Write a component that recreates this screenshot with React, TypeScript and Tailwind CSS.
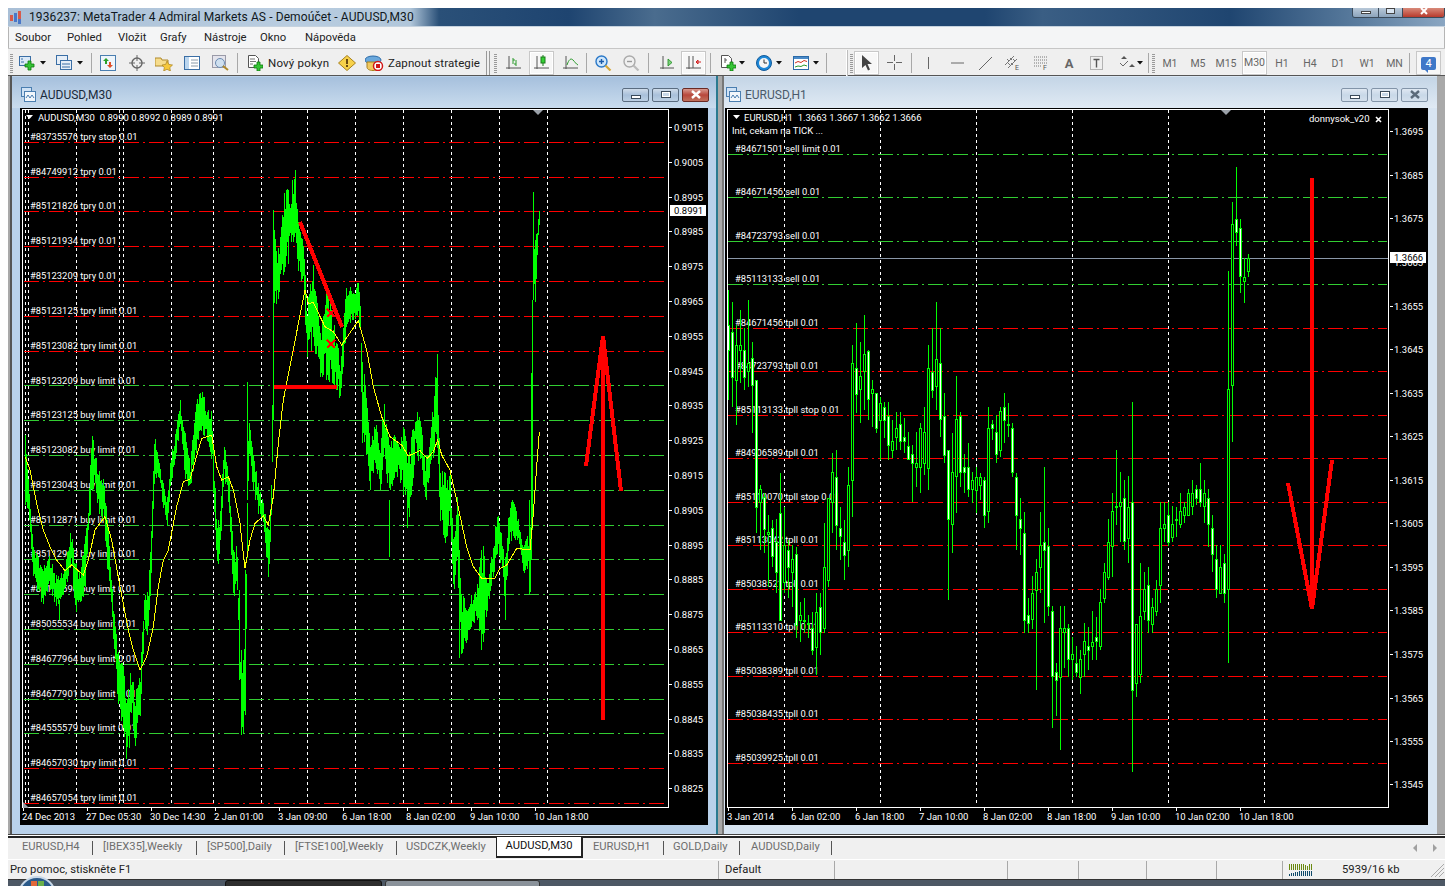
import React from "react";

type P3 = [number, number, number];
const FONT = "Roboto, 'Liberation Sans', sans-serif";

function rng(seed: number) {
  let s = seed;
  return () => {
    s = (s * 1664525 + 1013904223) % 4294967296;
    return s / 4294967296;
  };
}

const seg9: P3[] = [[15,100,320],[25,240,330],[40,445,550],[70,500,625],[85,460,560],[110,530,630],[135,500,570],[152,375,500],[165,480,635],[180,520,640],[195,390,560],[205,290,400],[215,100,290],[225,150,250],[235,200,350],[250,240,370],[262,350,520],[272,520,595],[282,640,770],[295,760,940],[310,800,990],[318,900,1080],[335,780,960],[345,880,1040],[360,810,950],[372,575,700],[382,575,710],[392,420,560],[403,95,240],[415,170,230],[425,230,300],[440,300,390],[450,180,270],[465,100,180],[480,0,90],[495,95,240],[510,190,280],[525,0,170],[545,-30,100],[565,30,130],[575,30,190],[590,380,530],[600,320,440],[612,125,250],[625,210,310],[640,460,600],[650,430,590],[658,750,800],[665,820,1000],[675,700,940],[685,40,180],[697,130,260],[712,240,340],[730,310,370],[745,390,560],[755,160,300]];
const seg7: P3[] = [[760,150,470],[770,300,440],[790,100,340],[810,70,300],[825,30,220],[835,200,350],[850,250,380],[860,440,620],[880,300,560],[900,500,650],[920,370,660],[940,470,680],[960,590,720],[980,360,500],[1000,400,490],[1015,355,480]];
const seg10: P3[] = [[60,360,480],[65,530,790],[75,600,810],[90,800,935],[105,715,850],[120,820,950],[130,650,830],[148,800,960],[160,760,900],[175,790,890],[190,730,950],[205,830,1040],[225,670,830],[240,715,860],[255,830,980],[270,770,880],[290,520,780],[300,880,1040],[315,860,1090],[330,880,1040],[340,1100,1235],[352,930,1200],[362,1230,1430],[383,1260,1380],[395,1240,1340],[410,1210,1320],[427,1080,1410],[440,1200,1300],[455,1120,1210],[472,980,1130],[485,1070,1160],[495,1130,1320],[505,1000,1100],[517,950,1080],[535,1020,1080],[550,1090,1180],[565,1060,1180],[570,1040,1240],[573,580,1040],[578,190,380],[585,180,370],[592,130,210],[598,85,140]];

const envL: P3[] = [
  ...seg9.map(([z, t, b]): P3 => [20 + z / 3, 400 + t / 3, 400 + b / 3]),
  ...seg7.map(([z, t, b]): P3 => [20 + z / 3, 160 + t / 3, 160 + b / 3]),
  ...seg10.map(([z, t, b]): P3 => [340 + z / 3, 180 + t / 3, 180 + b / 3]),
];

function leftBars() {
  const r = rng(77);
  let d = "";
  let j = 0;
  for (let x = 25; x <= 539; x++) {
    while (j < envL.length - 2 && envL[j + 1][0] < x) j++;
    const a = envL[j];
    const c = envL[j + 1];
    const f = Math.max(0, Math.min(1, (x - a[0]) / (c[0] - a[0] || 1)));
    const t = a[1] + (c[1] - a[1]) * f;
    const b = a[2] + (c[2] - a[2]) * f;
    const h = b - t;
    const r1 = r();
    const r2 = r();
    const top = Math.round(t + r1 * r1 * 0.35 * h);
    const bot = Math.round(b - r2 * r2 * 0.35 * h);
    d += `M${x + 0.5} ${top}V${bot}`;
  }
  const spikes = [[59,600,620],[273,210,420],[295,170,230],[389,500,557],[459,600,658],[481,600,650],[407,500,528],[437,354,420],[533,192,300],[532,300,530],[531,373,560],[529,500,594],[505,560,620],[247,382,500],[243,660,733],[239,590,680],[241,650,735],[245,570,715],[129,700,748]];
  spikes.forEach(([x, a, b]) => (d += `M${x + 0.5} ${a}V${b}`));
  return d;
}

const ma9 = [[15,170],[30,210],[50,310],[70,390],[90,440],[110,480],[135,512],[155,495],[190,525],[205,480],[225,390],[255,350],[275,420],[300,560],[325,690],[340,750],[360,810],[380,770],[400,680],[415,560],[430,480],[445,450],[470,320],[490,245],[510,238],[545,115],[575,105],[590,200],[605,240],[625,230],[640,270],[660,370],[675,505],[690,420],[705,370],[730,348],[745,375],[760,290],[775,130],[790,0]];
const ma7 = [[855,390],[865,430],[880,428],[915,500],[940,515],[965,555],[1015,482]];
const ma10 = [[60,440],[80,510],[100,620],[125,710],[150,770],[185,795],[205,828],[240,812],[262,835],[280,815],[293,780],[305,825],[330,870],[350,960],[380,1100],[400,1160],[425,1195],[465,1195],[480,1165],[500,1155],[530,1105],[570,1110],[580,1000],[590,860],[598,755]];
const maPts = [
  ...ma9.map(([z, y]) => `${20 + z / 3},${400 + y / 3}`),
  ...ma7.map(([z, y]) => `${20 + z / 3},${160 + y / 3}`),
  ...ma10.map(([z, y]) => `${340 + z / 3},${180 + y / 3}`),
].join(" ");

// [x, wickTop, bodyTop, bodyBottom, wickBottom, white]
type C = [number, number, number, number, number, number];
const c8: C[] = [[732,5,95,230,320,1],[736,75,135,240,375,0],[740,30,135,150,250,0],[744,85,150,230,270,1],[748,0,190,215,260,0],[752,125,175,255,400,1],[756,240,240,620,700,1],[760,555,568,608,750,0],[764,580,590,685,760,1],[768,645,695,700,860,0],[772,660,685,770,800,1],[776,658,725,815,880,1],[828,595,595,840,860,0],[832,460,515,605,700,0],[836,450,530,673,750,1],[840,620,685,710,780,1],[844,660,725,765,840,1],[848,500,555,750,800,0],[852,135,190,540,650,0],[856,70,203,280,340,1],[860,125,228,268,370,0],[864,45,163,215,330,0],[868,150,152,295,360,1],[872,240,268,280,380,0],[876,280,280,385,400,1],[880,290,308,358,480,0],[884,305,320,358,415,1],[888,305,347,435,480,1],[892,360,423,450,475,0],[896,335,385,412,450,0],[900,335,373,423,450,1],[904,355,412,423,460,1],[908,395,437,475,480,1],[912,435,463,490,605,1],[916,395,490,502,560,0],[920,370,385,502,580,0],[924,320,397,490,525,0],[928,135,203,502,570,0],[932,85,215,268,295,1],[936,5,176,257,330,0],[940,85,190,358,410,1],[944,280,347,463,490,1],[948,450,450,658,900,1],[952,400,517,673,760,0],[956,228,358,528,640,0],[960,335,347,515,560,1],[964,462,502,517,580,1],[968,430,502,568,590,1],[972,515,541,568,610,0],[976,500,530,568,640,0],[980,520,530,555,600,0],[984,530,541,645,685,1],[988,320,385,633,670,0],[992,360,373,385,420,1],[996,345,397,463,490,1],[1000,320,333,450,470,0],[1004,280,320,358,430,1],[1008,308,372,375,410,0]];
const c11: C[] = [[780,-200,-80,240,240,1],[784,-100,15,125,160,0],[788,0,30,80,175,1],[792,15,58,98,200,0],[796,20,42,255,295,1],[800,185,225,240,305,0],[804,175,239,241,280,0],[808,225,249,251,295,0],[812,215,265,330,345,1],[816,160,215,320,405,0],[820,160,200,275,345,1],[824,-50,82,265,280,0]];
const c12: C[] = [[1012,820,835,968,980,1],[1016,968,980,1095,1200,1],[1020,1045,1108,1135,1215,1],[1024,1085,1148,1408,1448,1],[1028,1345,1395,1420,1448,1],[1032,1278,1330,1408,1438,0],[1036,1228,1265,1318,1620,0],[1040,1085,1185,1252,1330,0],[1044,950,1175,1200,1420,1],[1048,1135,1187,1368,1397,1],[1052,1368,1383,1578,1734,1],[1056,1539,1566,1590,1698,1],[1060,1368,1434,1580,1800,0],[1064,1368,1435,1448,1554,0],[1068,1422,1435,1527,1581,1],[1072,1461,1513,1528,1590,0],[1076,1488,1540,1566,1581,1],[1080,1500,1527,1581,1632,0],[1084,1420,1473,1513,1581,0],[1088,1430,1488,1500,1560,1],[1092,1383,1475,1488,1530,0],[1096,1400,1462,1475,1530,1],[1100,1318,1357,1490,1500,0],[1104,1240,1267,1345,1358,0],[1108,1108,1175,1280,1290,0],[1112,1030,1083,1187,1280,0],[1116,900,1069,1071,1125,0],[1120,967,1057,1070,1175,0],[1124,990,1045,1175,1200,1],[1128,978,1070,1162,1240,0],[1132,756,1057,1620,1866,1],[1136,1422,1422,1600,1640,0],[1140,1240,1397,1570,1600,0],[1144,1265,1318,1383,1410,0],[1148,1252,1305,1410,1448,1],[1152,1345,1370,1422,1448,0],[1156,1290,1318,1383,1397,0],[1160,1057,1135,1305,1358,0],[1164,1057,1122,1135,1175,0],[1168,1057,1095,1175,1187,1],[1172,1068,1122,1162,1175,0],[1176,1070,1107,1109,1160,0],[1180,1030,1083,1122,1135,0],[1184,1057,1070,1095,1120,0],[1188,1018,1030,1095,1095,0],[1192,990,1030,1070,1095,0],[1196,1005,1018,1045,1065,1],[1200,938,1018,1057,1070,1],[1204,990,1030,1070,1120,0],[1208,1018,1045,1122,1190,1],[1212,1095,1135,1213,1265,1],[1216,1185,1228,1318,1345,1],[1220,1185,1252,1330,1330,0],[1224,1213,1240,1330,1360,1],[1228,362,718,1318,1540,0],[1232,155,222,705,875,0],[1236,52,208,247,287,1],[1240,208,235,380,430,1],[1244,325,380,392,458,0],[1248,312,325,365,380,0]];

const candles: C[] = [
  ...c8.map(([x, a, b, c, d, w]): C => [x, 300 + a / 3, 300 + b / 3, 300 + c / 3, 300 + d / 3, w]),
  ...c11.map(([x, a, b, c, d, w]): C => [x, 540 + a / 3, 540 + b / 3, 540 + c / 3, 540 + d / 3, w]),
  ...c12.map(([x, a, b, c, d, w]): C => [x, 150 + a / 3, 150 + b / 3, 150 + c / 3, 150 + d / 3, w]),
  [728,290,325,350,400,1],
];

const lBars = leftBars();

const lLabels = [
  ["#83735576 tpry stop 0.01", 136],["#84749912 tpry 0.01", 171],["#85121826 tpry 0.01", 205],["#85121934 tpry 0.01", 240],["#85123209 tpry 0.01", 275],["#85123125 tpry limit 0.01", 310],["#85123082 tpry limit 0.01", 345],["#85123209 buy limit 0.01", 380],["#85123125 buy limit 0.01", 414],["#85123082 buy limit 0.01", 449],["#85123043 buy limit 0.01", 484],["#85112871 buy limit 0.01", 519],["#85112913 buy limit 0.01", 553],["#85113590 buy limit 0.01", 588],["#85055534 buy limit 0.01", 623],["#84677964 buy limit 0.01", 658],["#84677901 buy limit 0.01", 693],["#84555579 buy limit 0.01", 727],["#84657030 tpry limit 0.01", 762],["#84657054 tpry limit 0.01", 797],
] as [string, number][];
const lRed = [142, 177, 211, 246, 281, 316, 351, 768, 803];
const lGreen = [385, 420, 455, 490, 525, 559, 594, 629, 664, 699, 733];
const lGrid = [25, 28, 76, 119, 123, 171, 213, 261, 307, 355, 403, 451, 499, 547];
const lPrices = [["0.9015",127],["0.9005",162],["0.8995",197],["0.8985",231],["0.8975",266],["0.8965",301],["0.8955",336],["0.8945",371],["0.8935",405],["0.8925",440],["0.8915",475],["0.8905",510],["0.8895",545],["0.8885",579],["0.8875",614],["0.8865",649],["0.8855",684],["0.8845",719],["0.8835",753],["0.8825",788]] as [string, number][];
const lTimes = [["24 Dec 2013",22],["27 Dec 05:30",86],["30 Dec 14:30",150],["2 Jan 01:00",214],["3 Jan 09:00",278],["6 Jan 18:00",342],["8 Jan 02:00",406],["9 Jan 10:00",470],["10 Jan 18:00",534]] as [string, number][];

const rLabels = [
  ["#84671501 sell limit 0.01",148],["#84671456 sell 0.01",191],["#84723793 sell 0.01",235],["#85113133 sell 0.01",278],["#84671456 tpll 0.01",322],["#84723793 tpll 0.01",365],["#85113133 tpll stop 0.01",409],["#84906589 tpll 0.01",452],["#85110070 tpll stop 0.01",496],["#85113042 tpll 0.01",539],["#85038521 tpll 0.01",583],["#85113310 tpll 0.01",626],["#85038389 tpll 0.01",670],["#85038435 tpll 0.01",713],["#85039925 tpll 0.01",757],
] as [string, number][];
const rGreen = [154, 197, 241, 284];
const rRed = [328, 371, 415, 458, 502, 545, 589, 632, 676, 719, 763];
const rGrid = [784, 880, 976, 1072, 1168, 1264];
const rPrices = [["1.3695",131],["1.3685",175],["1.3675",218],["1.3665",262],["1.3655",306],["1.3645",349],["1.3635",393],["1.3625",436],["1.3615",480],["1.3605",523],["1.3595",567],["1.3585",610],["1.3575",654],["1.3565",698],["1.3555",741],["1.3545",784]] as [string, number][];
const rTimes = [["3 Jan 2014",727],["6 Jan 02:00",791],["6 Jan 18:00",855],["7 Jan 10:00",919],["8 Jan 02:00",983],["8 Jan 18:00",1047],["9 Jan 10:00",1111],["10 Jan 02:00",1175],["10 Jan 18:00",1239]] as [string, number][];

const chartText = { fontFamily: FONT, fontSize: 9.5, fill: "#fff" } as const;
const LBL = 9.4;

function LeftChart() {
  return (
    <svg viewBox="20 108 688 717" className="block w-[688px] h-[717px] bg-black" style={chartText}>
      <g stroke="#fff" strokeDasharray="3 3" shapeRendering="crispEdges">
        {lGrid.map((x) => <line key={x} x1={x + 0.5} x2={x + 0.5} y1={110} y2={806} />)}
      </g>
      <g strokeDasharray="15 4 2 4" shapeRendering="crispEdges">
        {lRed.map((y) => <line key={y} x1={24} x2={667} y1={y + 0.5} y2={y + 0.5} stroke="#ff0000" />)}
        {lGreen.map((y) => <line key={y} x1={24} x2={667} y1={y + 0.5} y2={y + 0.5} stroke="#32cd32" />)}
      </g>
      {lLabels.map(([t, y]) => <text key={y} x={30} y={y + 3.5} fontSize={LBL}>{t}</text>)}
      <path d={lBars} stroke="#00ff00" fill="none" shapeRendering="crispEdges" />
      <polyline points={maPts} fill="none" stroke="#ffff00" strokeWidth={1} shapeRendering="crispEdges" />
      <g stroke="#ff0000" fill="none" strokeWidth={4} shapeRendering="crispEdges">
        <line x1={300} y1={222} x2={342} y2={327} />
        <line x1={274} y1={387} x2={337} y2={387} />
        <line x1={603} y1={720} x2={603} y2={336} />
        <path d="M586 466L603 336L621 491" strokeLinejoin="bevel" />
        <path d="M327 340l8 8m0-8l-8 8M327 309l8 8m0-8l-8 8" strokeWidth={2} />
      </g>
      <rect x={22.5} y={109.5} width={646} height={698} fill="none" stroke="#fff" shapeRendering="crispEdges" />
      <path d="M533 110h10l-5 5z" fill="#9aa0a8" />
      <path d="M23 808v-6l6 6z" fill="#9aa0a8" />
      <path d="M26 115h7l-3.500 4z" fill="#fff" />
      <text x={38} y={120.5}>{"AUDUSD,M30\u00a0\u00a00.8990 0.8992 0.8989 0.8991"}</text>
      {lPrices.map(([t, y]) => (
        <g key={t}>
          <line x1={669} x2={672} y1={y + 0.5} y2={y + 0.5} stroke="#fff" shapeRendering="crispEdges" />
          <text x={674} y={y + 3.5}>{t}</text>
        </g>
      ))}
      <rect x={670} y={205} width={36} height={11} fill="#fff" />
      <text x={674} y={214} style={{ fill: "#000" }}>0.8991</text>
      {lTimes.map(([t, x]) => (
        <g key={t}>
          <line x1={x + 1.5} x2={x + 1.5} y1={808} y2={811} stroke="#fff" shapeRendering="crispEdges" />
          <text x={x} y={820}>{t}</text>
        </g>
      ))}
    </svg>
  );
}

function RightChart() {
  return (
    <svg viewBox="725 108 703 717" className="block w-[703px] h-[717px] bg-black" style={chartText}>
      <g stroke="#fff" strokeDasharray="3 3" shapeRendering="crispEdges">
        {rGrid.map((x) => <line key={x} x1={x + 0.5} x2={x + 0.5} y1={110} y2={806} />)}
      </g>
      <g strokeDasharray="15 4 2 4" shapeRendering="crispEdges">
        {rGreen.map((y) => <line key={y} x1={728} x2={1387} y1={y + 0.5} y2={y + 0.5} stroke="#32cd32" />)}
        {rRed.map((y) => <line key={y} x1={728} x2={1387} y1={y + 0.5} y2={y + 0.5} stroke="#ff0000" />)}
      </g>
      <line x1={727} x2={1389} y1={258.5} y2={258.5} stroke="#8a97a8" shapeRendering="crispEdges" />
      {rLabels.map(([t, y]) => <text key={y} x={735} y={y + 3.5} fontSize={LBL}>{t}</text>)}
      <g shapeRendering="crispEdges">
        {candles.map(([x, a, b, c, d, w]) => (
          <g key={x}>
            <line x1={x + 0.5} x2={x + 0.5} y1={Math.round(a)} y2={Math.round(d)} stroke="#00ff00" />
            <rect x={x - 0.5} y={Math.round(b) + 0.5} width={2} height={Math.max(1, Math.round(c - b))} stroke="#00ff00" fill={w ? "#fff" : "#000"} />
          </g>
        ))}
      </g>
      <g stroke="#ff0000" fill="none" strokeWidth={4} shapeRendering="crispEdges">
        <line x1={1312} y1={178} x2={1312} y2={609} />
        <path d="M1288 483L1312 609L1332 460" strokeLinejoin="bevel" />
      </g>
      <rect x={727.5} y={109.5} width={661} height={698} fill="none" stroke="#fff" shapeRendering="crispEdges" />
      <path d="M1221 110h10l-5 5z" fill="#9aa0a8" />
      <path d="M733 115h7l-3.500 4z" fill="#fff" />
      <text x={744} y={120.5}>{"EURUSD,H1\u00a0\u00a01.3663 1.3667 1.3662 1.3666"}</text>
      <text x={732} y={133.5}>Init, cekam na TICK ...</text>
      <text x={1309} y={121.5}>donnysok_v20</text>
      <path d="M1376 117l5 5m0-5l-5 5" stroke="#fff" strokeWidth={1.6} />
      {rPrices.map(([t, y]) => (
        <g key={t}>
          <line x1={1390} x2={1393} y1={y + 0.5} y2={y + 0.5} stroke="#fff" shapeRendering="crispEdges" />
          <text x={1394} y={y + 3.5}>{t}</text>
        </g>
      ))}
      <rect x={1390} y={252} width={36} height={11} fill="#fff" />
      <text x={1394} y={261} style={{ fill: "#000" }}>1.3666</text>
      {rTimes.map(([t, x]) => (
        <g key={t}>
          <line x1={x + 1.5} x2={x + 1.5} y1={808} y2={811} stroke="#fff" shapeRendering="crispEdges" />
          <text x={x} y={820}>{t}</text>
        </g>
      ))}
    </svg>
  );
}

const Sep = ({ c }: { c: string }) => <div className={`w-px h-[20px] bg-[#a8a8a8] ${c}`} />;
const Grip = ({ c }: { c: string }) => (
  <div className={`w-[3px] h-[20px] bg-[repeating-linear-gradient(0deg,#9a9a9a_0,#9a9a9a_1px,#efefef_1px,#efefef_2px)] ${c}`} />
);
const Drop = ({ c }: { c: string }) => (
  <svg width="6" height="4" viewBox="0 0 6 4" className={c}><path d="M0 0h6L3 3.500z" fill="#111" /></svg>
);
const Ico = ({ c, w = 16, children }: { c: string; w?: number; children: React.ReactNode }) => (
  <svg width={w} height={16} viewBox={`0 0 ${w} 16`} className={`shrink-0 ${c}`} fill="none">{children}</svg>
);
const Press = ({ c, children }: { c: string; children: React.ReactNode }) => (
  <div className={`w-[25px] h-[24px] flex items-center justify-center border border-[#c8c8c8] bg-[#f7f7f7] shadow-[inset_0_0_0_1px_#fff] text-[10.5px] text-[#666] ${c}`}>{children}</div>
);
const Plus = ({ x = 0, y = 0 }: { x?: number; y?: number }) => (
  <path transform={`translate(${x} ${y})`} d="M3 0h3v3h3v3H6v3H3V6H0V3h3z" fill="#35c435" stroke="#0c7a0c" strokeWidth="0.8" />
);
const Axes = () => <path d="M3 1v13M0 13h15" stroke="#555" strokeWidth="1" />;
const TF = ({ c, w, children }: { c: string; w: string; children: React.ReactNode }) => (
  <div className={`text-center text-[10.5px] text-[#666] pt-px ${w} ${c}`}>{children}</div>
);

function Toolbar() {
  return (
    <div className="h-[28px] pt-[2px] bg-[#efefef] border-t border-[#c6c6c6] border-b border-b-[#555] flex items-center shrink-0">
      <Grip c="ml-[2px]" />
      <Ico c="ml-[6px]"><rect x="0.5" y="1.5" width="11" height="9" fill="#dbe9f7" stroke="#3a6ea5" /><path d="M2 4h2M2 7h3" stroke="#3a6ea5" /><Plus x={6} y={6} /></Ico>
      <Drop c="ml-[5px]" />
      <Ico c="ml-[10px]"><rect x="0.5" y="0.5" width="11" height="9" fill="#e6eef7" stroke="#3a6ea5" /><rect x="4.5" y="5.5" width="11" height="9" fill="#e6eef7" stroke="#3a6ea5" /><path d="M6 9h8M6 12h8" stroke="#3a6ea5" /></Ico>
      <Drop c="ml-[5px]" />
      <Sep c="ml-[8px]" />
      <Ico c="ml-[8px]"><rect x="0.5" y="0.5" width="15" height="15" fill="#eef5fb" stroke="#4a7eb0" /><path d="M6 3l3 3H7v3H5V6H3z" fill="#2aa02a" /><path d="M10 13l-3-3h2V7h2v3h2z" fill="#e0502a" /></Ico>
      <Ico c="ml-[13px]"><circle cx="8" cy="8" r="5" stroke="#666" strokeWidth="1.4" /><path d="M8 0v6M8 10v6M0 8h6M10 8h6" stroke="#666" /></Ico>
      <Ico c="ml-[10px]" w={18}><path d="M0 3h6l1 2h6v6H0z" fill="#f6dc8c" stroke="#b08a2c" /><path d="M12 6l1.800 3.400 3.700.6-2.700 2.600.6 3.400-3.400-1.700-3.300 1.700.6-3.400L7 10l3.700-.6z" fill="#f6c83a" stroke="#a8801c" strokeWidth="0.7" /></Ico>
      <Ico c="ml-[11px]"><rect x="0.5" y="1.5" width="15" height="13" fill="#fff" stroke="#3a6ea5" /><rect x="1" y="2" width="4" height="12" fill="#bcd6ee" /><path d="M7 5h7M7 8h7M7 11h7" stroke="#8a9aa8" /></Ico>
      <Ico c="ml-[12px]" w={18}><rect x="0.5" y="0.5" width="13" height="12" fill="#e4e4ec" stroke="#9a9aa8" /><circle cx="8" cy="8" r="4.500" fill="#cfe0f0" stroke="#6a8ab0" /><path d="M11 11l5 4" stroke="#b08a2c" strokeWidth="2" /></Ico>
      <Sep c="ml-[7px]" />
      <Ico c="ml-[9px]"><path d="M1.500 0.500h7l3 3v9h-10z" fill="#fff" stroke="#555" /><path d="M3 4h5M3 6.500h6M3 9h3" stroke="#777" /><Plus x={7} y={7} /></Ico>
      <div className="ml-[5px] w-[61px] pt-px whitespace-nowrap text-[11.5px] tracking-[0.2px] text-[#222]">Nový pokyn</div>
      <Ico c="ml-[9px]" w={18}><path d="M9 0.500L17.500 8 9 15.500 0.500 8z" fill="#f7d14a" stroke="#a8801c" /><rect x="8" y="4" width="2" height="5" fill="#6a4a10" /><rect x="8" y="10" width="2" height="2" fill="#6a4a10" /></Ico>
      <Ico c="ml-[9px]" w={19}><ellipse cx="8" cy="5" rx="8" ry="4" fill="#6aa8dc" stroke="#2a6aa8" /><path d="M2 7h12v5c0 2-2 3.500-6 3.500S2 14 2 12z" fill="#f0c860" stroke="#a8801c" /><circle cx="13" cy="11" r="4.500" fill="#fff" stroke="#d01818" strokeWidth="1.500" /><rect x="11" y="9" width="4" height="4" fill="#d01818" /></Ico>
      <div className="ml-[4px] w-[93px] pt-px whitespace-nowrap text-[11.5px] tracking-[0.1px] text-[#222]">Zapnout strategie</div>
      <div className="ml-[5px] w-[4px] h-[24px] border-x border-[#999]" />
      <Grip c="ml-[4px]" />
      <Ico c="ml-[9px]"><Axes /><path d="M7 3v6M7 5h2M10 5v6M8 9h2" stroke="#2a9a2a" /></Ico>
      <Press c="ml-[7px]"><Ico c=""><Axes /><line x1="9" y1="0" x2="9" y2="11" stroke="#1a7a1a" /><rect x="7" y="2" width="4" height="6" fill="#34d034" stroke="#1a7a1a" /></Ico></Press>
      <Ico c="ml-[9px]"><Axes /><path d="M4 10C6 4 8 3 10 5s3 4 5 5" stroke="#2a9a2a" /></Ico>
      <Sep c="ml-[7px]" />
      <Ico c="ml-[8px]" w={17}><circle cx="6.500" cy="6.500" r="5.500" fill="#cfe6fa" stroke="#2a78c8" strokeWidth="1.400" /><path d="M4 6.500h5M6.500 4v5" stroke="#1a5aa8" strokeWidth="1.400" /><path d="M10.500 10.500l5 5" stroke="#d8a838" strokeWidth="2.200" /></Ico>
      <Ico c="ml-[11px]" w={17}><circle cx="6.500" cy="6.500" r="5.500" fill="#f0f0f0" stroke="#aaa" strokeWidth="1.400" /><path d="M4 6.500h5" stroke="#999" strokeWidth="1.400" /><path d="M10.500 10.500l5 5" stroke="#bbb" strokeWidth="2.200" /></Ico>
      <Sep c="ml-[8px]" />
      <Ico c="ml-[11px]" w={14}><Axes /><path d="M8 4v7l4-3.500z" fill="#7ed07e" stroke="#1a8a1a" strokeWidth="0.8" /></Ico>
      <Press c="ml-[7px]"><Ico c=""><Axes /><path d="M7 1v12" stroke="#555" /><path d="M10 7h5M10 7l2-2v4z" stroke="#d02020" /></Ico></Press>
      <Sep c="ml-[4px]" />
      <Ico c="ml-[9px]"><path d="M1.500 0.500h7l3 3v9h-10z" fill="#fff" stroke="#555" /><path d="M5 3v5M5 5h2" stroke="#555" /><Plus x={7} y={7} /></Ico>
      <Drop c="ml-[3px]" />
      <Ico c="ml-[11px]"><circle cx="8" cy="8" r="7.500" fill="#1e88d8" stroke="#125a9a" /><circle cx="8" cy="8" r="5" fill="#f6f6f6" /><path d="M8 4.500V8h3" stroke="#333" /></Ico>
      <Drop c="ml-[4px]" />
      <Ico c="ml-[11px]"><rect x="0.500" y="1.500" width="15" height="13" fill="#fff" stroke="#2a6aa8" /><rect x="1" y="2" width="14" height="2" fill="#4a8ac8" /><path d="M2 8l3-1.500 3 1 3-2 3 1" stroke="#d03020" /><path d="M2 12l3-1 3 .5 3-1.500 3 1" stroke="#2a9a2a" /></Ico>
      <Drop c="ml-[4px]" />
      <Sep c="ml-[7px]" />
      <div className="ml-[19px] w-[2px] h-[26px] bg-[#bdbdbd] border-l border-white" />
      <Grip c="ml-[2px]" />
      <Press c="ml-[1px]"><Ico c=""><path d="M3 0v13l3.500-3 2.500 5.500 2-1-2.500-5.500H13z" fill="#444" /></Ico></Press>
      <Ico c="ml-[8px]" w={15}><path d="M7.500 0v6M7.500 9v6M0 7.500h6M9 7.500h6" stroke="#666" /></Ico>
      <Sep c="ml-[9px]" />
      <Ico c="ml-[9px]" w={15}><path d="M7.500 2v12" stroke="#666" /></Ico>
      <Ico c="ml-[14px]" w={15}><path d="M1 8h13" stroke="#666" /></Ico>
      <Ico c="ml-[13px]" w={15}><path d="M1 15L14 2" stroke="#666" /></Ico>
      <Ico c="ml-[12px]"><path d="M0 10L9 1M3 13l9-9M2 4l2 2M5 3l2 2M8 4l2 2M3 8l2 2M6 8l2 2" stroke="#777" /><text x="10" y="14.500" fontSize="7" fill="#555" fontFamily={FONT}>E</text></Ico>
      <Ico c="ml-[12px]"><path d="M1 2h13M1 5h13M1 8h13M1 11h8" stroke="#777" strokeDasharray="1 1" /><text x="10" y="14.500" fontSize="7" fill="#555" fontFamily={FONT}>F</text></Ico>
      <div className="ml-[13px] w-[14px] text-center text-[13px] font-bold text-[#666] leading-none">A</div>
      <Ico c="ml-[13px]" w={15}><rect x="1.500" y="1.500" width="12" height="13" stroke="#777" strokeDasharray="1 1" /><path d="M4.500 4.500h6M7.500 4.500v8" stroke="#555" strokeWidth="1.400" /></Ico>
      <Ico c="ml-[15px]" w={17}><path d="M5 1l3 3H2zM13 9l3 3h-6z" fill="#555" /><path d="M1 8l3 3 5-5" stroke="#666" /></Ico>
      <Drop c="ml-[1px]" />
      <Sep c="ml-[5px]" />
      <Grip c="ml-[3px]" />
      <TF c="ml-[1px]" w="w-[28px]">M1</TF>
      <TF c="" w="w-[28px]">M5</TF>
      <TF c="" w="w-[28px]">M15</TF>
      <Press c="ml-[2px]">M30</Press>
      <TF c="ml-[1px]" w="w-[28px]">H1</TF>
      <TF c="" w="w-[28px]">H4</TF>
      <TF c="" w="w-[28px]">D1</TF>
      <TF c="ml-[1px]" w="w-[28px]">W1</TF>
      <TF c="" w="w-[27px]">MN</TF>
      <Sep c="ml-[1px]" />
      <div className="ml-[6px] w-[25px] h-[24px] flex items-center justify-center border border-[#c8c8c8] bg-[#f7f7f7]">
        <div className="relative w-[15px] h-[13px] bg-[#3f78c8] rounded-[2px] flex items-center justify-center text-[11px] text-white leading-none">4<div className="absolute -bottom-[3px] left-[3px] w-0 h-0 border-t-[4px] border-t-[#3f78c8] border-l-[4px] border-l-transparent" /></div>
      </div>
    </div>
  );
}

const ChildIcon = () => (
  <svg width="15" height="15" viewBox="0 0 15 15" className="shrink-0" fill="none">
    <rect x="0.500" y="0.500" width="10" height="9" fill="#cfe2f5" stroke="#4a7eb0" />
    <rect x="3.500" y="4.500" width="11" height="10" fill="#f2f7fc" stroke="#4a7eb0" />
    <path d="M5 11l2-3 2 3 2-3 2 3" stroke="#4a7eb0" />
  </svg>
);
const CapBtn = ({ k, active }: { k: "min" | "max" | "close"; active: boolean }) => {
  const bg = k === "close" && active
    ? "bg-[linear-gradient(180deg,#d99a90,#b8483c_50%,#c0705c)] border-[#6a2a24]"
    : active
    ? "bg-[linear-gradient(180deg,#cfdcea,#a8c0da_50%,#bcd0e4)] border-[#5a6c80]"
    : "bg-[linear-gradient(180deg,#dfe8f2,#c8d8e8_50%,#d4e0ec)] border-[#8294a8]";
  return (
    <div className={`w-[27px] h-[14px] rounded-[2px] border flex items-center justify-center ${bg}`}>
      {k === "min" && <div className="w-[10px] h-[4px] mt-[4px] bg-white border border-[#3a4a5a]" />}
      {k === "max" && <div className="w-[10px] h-[7px] bg-white border border-[#3a4a5a] flex items-center justify-center"><div className="w-[6px] h-[3px] bg-[#c8d8e8]" /></div>}
      {k === "close" && (
        <svg width="12" height="9" viewBox="0 0 12 9"><path d="M2 1l8 7M10 1l-8 7" stroke={active ? "#fff" : "#5a6a7a"} strokeWidth="2.400" /></svg>
      )}
    </div>
  );
};

const tabClass = "text-[11.2px] text-[#6e6e6e] whitespace-nowrap";
const TabSep = ({ c }: { c: string }) => <div className={`w-px h-[14px] bg-[#555] ${c}`} />;
const StatSep = ({ c }: { c: string }) => <div className={`w-px h-[18px] bg-[#a8a8a8] ${c}`} />;

export default function App() {
  return (
    <div className="w-[1452px] h-[886px] bg-white overflow-hidden pl-[8px] pr-[7px] pt-[8px] flex flex-col" style={{ fontFamily: FONT }}>
      {/* window title */}
      <div className="relative h-[19px] shrink-0 flex items-center bg-[linear-gradient(90deg,#a9bfd6_0%,#b9cde0_20%,#b0c6da_28%,#2a5078_30%,#1e4470_39%,#4a6c8e_45%,#1f4570_55%,#1f4570_68%,#3a5e84_72%,#1f4570_85%,#5a7c9e_94%,#8aa6c2_100%)] border-b border-[#c5d2de]">
        <svg width="13" height="13" viewBox="0 0 13 13" className="ml-[2px]">
          <rect x="0" y="4" width="3" height="6" fill="#d85a4a" /><rect x="4" y="2" width="3" height="9" fill="#4a78c8" /><rect x="8" y="0" width="3" height="8" fill="#d85a4a" /><rect x="8" y="8" width="3" height="5" fill="#4a78c8" />
        </svg>
        <span className="ml-[6px] text-[12px] tracking-[0.1px] text-[#101820] whitespace-nowrap">1936237: MetaTrader 4 Admiral Markets AS - Demoúčet - AUDUSD,M30</span>
        <div className="absolute right-0 top-0 h-[10px] w-[93px] flex rounded-b-[3px] border border-t-0 border-[#3a4a5a] overflow-hidden">
          <div className="w-[25px] bg-[linear-gradient(180deg,#b8c8d8,#8ca4bc)] flex justify-center items-center"><div className="w-[10px] h-[3px] bg-white border border-[#444]" /></div>
          <div className="w-[24px] bg-[linear-gradient(180deg,#b8c8d8,#8ca4bc)] border-l border-[#3a4a5a] flex justify-center"><div className="w-[9px] h-[6px] border border-[#444] bg-[#d8e4f0]" /></div>
          <div className="flex-1 bg-[linear-gradient(180deg,#d88a7a,#b83a2c)] border-l border-[#3a4a5a] flex justify-center"><svg width="12" height="8" viewBox="0 0 12 8"><path d="M3 0l6 6M9 0L3 6" stroke="#fff" strokeWidth="2" /></svg></div>
        </div>
      </div>
      {/* menu */}
      <div className="h-[21px] pt-[2px] shrink-0 bg-[#f4f5f6] flex items-center text-[11.3px] text-[#222] border-l border-r border-[#b5b5b5]">
        <span className="ml-[6px] w-[52px]">Soubor</span>
        <span className="w-[51px]">Pohled</span>
        <span className="w-[42px]">Vložit</span>
        <span className="w-[44px]">Grafy</span>
        <span className="w-[56px]">Nástroje</span>
        <span className="w-[45px]">Okno</span>
        <span>Nápověda</span>
      </div>
      <Toolbar />
      {/* MDI */}
      <div className="h-[759px] shrink-0 bg-[#a9a9a9] flex pl-[2px] pr-[3px] border-b border-[#444]">
        <div className="w-[708px] bg-[#b9d1ea] border-l-2 border-[#555] border-r-2 border-r-[#2a7a90] flex flex-col">
          <div className="h-[31px] mt-[1px] pt-[4px] flex items-center pl-[9px] pr-[7px] bg-[linear-gradient(180deg,#a6c0dd,#c9dcee)]">
            <ChildIcon />
            <span className="ml-[4px] text-[12px] text-[#1a2a3a]">AUDUSD,M30</span>
            <div className="ml-auto flex gap-[3px]"><CapBtn k="min" active /><CapBtn k="max" active /><CapBtn k="close" active /></div>
          </div>
          <div className="ml-[8px]"><LeftChart /></div>
        </div>
        <div className="ml-[4px] w-[715px] bg-[#d8e5f2] border-l-2 border-[#777] flex flex-col">
          <div className="h-[31px] mt-[1px] pt-[4px] flex items-center pl-[2px] pr-[9px] bg-[linear-gradient(180deg,#c4d5e6,#e0eaf4)]">
            <ChildIcon />
            <span className="ml-[4px] text-[12px] text-[#4a5a6a]">EURUSD,H1</span>
            <div className="ml-auto flex gap-[3px]"><CapBtn k="min" active={false} /><CapBtn k="max" active={false} /><CapBtn k="close" active={false} /></div>
          </div>
          <div className="ml-[1px]"><RightChart /></div>
        </div>
      </div>
      {/* tabs */}
      <div className="h-[23px] pb-[2px] shrink-0 bg-[#f0f0f0] border-t-[2px] border-[#222] mt-[1px] flex items-center">
        <span className={`ml-[14px] w-[58px] ${tabClass}`}>EURUSD,H4</span>
        <TabSep c="ml-[12px]" />
        <span className={`ml-[10px] w-[80px] ${tabClass}`}>[IBEX35],Weekly</span>
        <TabSep c="ml-[13px]" />
        <span className={`ml-[10px] w-[64px] ${tabClass}`}>[SP500],Daily</span>
        <TabSep c="ml-[13px]" />
        <span className={`ml-[10px] w-[88px] ${tabClass}`}>[FTSE100],Weekly</span>
        <TabSep c="ml-[13px]" />
        <span className={`ml-[9px] w-[78px] ${tabClass}`}>USDCZK,Weekly</span>
        <div className="ml-[12px] w-[87px] h-[21px] bg-white border-b-2 border-r-2 border-[#222] border-l border-l-[#222] text-[11.2px] text-[#111] flex items-center justify-center whitespace-nowrap">AUDUSD,M30</div>
        <span className={`ml-[10px] w-[58px] ${tabClass}`}>EURUSD,H1</span>
        <TabSep c="ml-[12px]" />
        <span className={`ml-[9px] w-[54px] ${tabClass}`}>GOLD,Daily</span>
        <TabSep c="ml-[12px]" />
        <span className={`ml-[11px] w-[67px] ${tabClass}`}>AUDUSD,Daily</span>
        <TabSep c="ml-[13px]" />
        <svg width="24" height="8" viewBox="0 0 24 8" className="ml-auto mr-[8px]"><path d="M4 0v8L0 4zM20 0v8l4-4z" fill="#a0a0a0" /></svg>
      </div>
      {/* status */}
      <div className="h-[20px] pt-[1px] shrink-0 bg-[#f0f0f0] border-t border-white flex items-center text-[11.2px] tracking-[0.05px] text-[#222]">
        <span className="ml-[2px] w-[708px] whitespace-nowrap">Pro pomoc, stiskněte F1</span>
        <StatSep c="" />
        <span className="ml-[6px] w-[109px]">Default</span>
        <StatSep c="" />
        <StatSep c="ml-[172px]" />
        <StatSep c="ml-[70px]" />
        <StatSep c="ml-[67px]" />
        <StatSep c="ml-[69px]" />
        <StatSep c="ml-[65px]" />
        <svg width="24" height="12" viewBox="0 0 24 12" className="ml-[5px]" shapeRendering="crispEdges">
          <path d="M1.500 0v6M3.500 0v6M5.500 0v6M7.500 0v6M9.500 0v6M11.500 0v6M13.500 0v6M15.500 0v6M17.500 1v5M19.500 2v4M21.500 0v6M23.500 0v6" stroke="#6a8a10" />
          <path d="M1.500 10v2M3.500 9v3M5.500 9v3M7.500 8v4M9.500 8v4M11.500 7v5M13.500 7v5M15.500 7v5M17.500 7v5M19.500 7v5M21.500 7v5M23.500 7v5" stroke="#0f4a6a" />
        </svg>
        <span className="ml-[30px] whitespace-nowrap">5939/16 kb</span>
        <svg width="15" height="15" viewBox="0 0 15 15" className="ml-auto"><path d="M14 1L1 14M14 5L5 14M14 9l-5 5" stroke="#aaa" /></svg>
      </div>
      {/* taskbar */}
      <div className="relative flex-1 bg-[#4d5865] flex border-t border-[#333]">
        <div className="absolute left-[10px] -top-[4px] w-[38px] h-[38px] rounded-full bg-[#2a5a8a] border-2 border-[#c8d8e8] flex justify-center gap-px pt-[3px]">
          <div className="w-[6px] h-[6px] bg-[#e0683a]" /><div className="w-[6px] h-[6px] bg-[#6ab04a]" />
        </div>
        <div className="ml-[217px] w-[157px] h-[10px] bg-[#2e2e2e] rounded-t-[3px] border border-[#111]" />
        <div className="ml-[3px] w-[155px] h-[10px] bg-[#8a929a] rounded-t-[3px] border border-[#333]" />
      </div>
    </div>
  );
}
